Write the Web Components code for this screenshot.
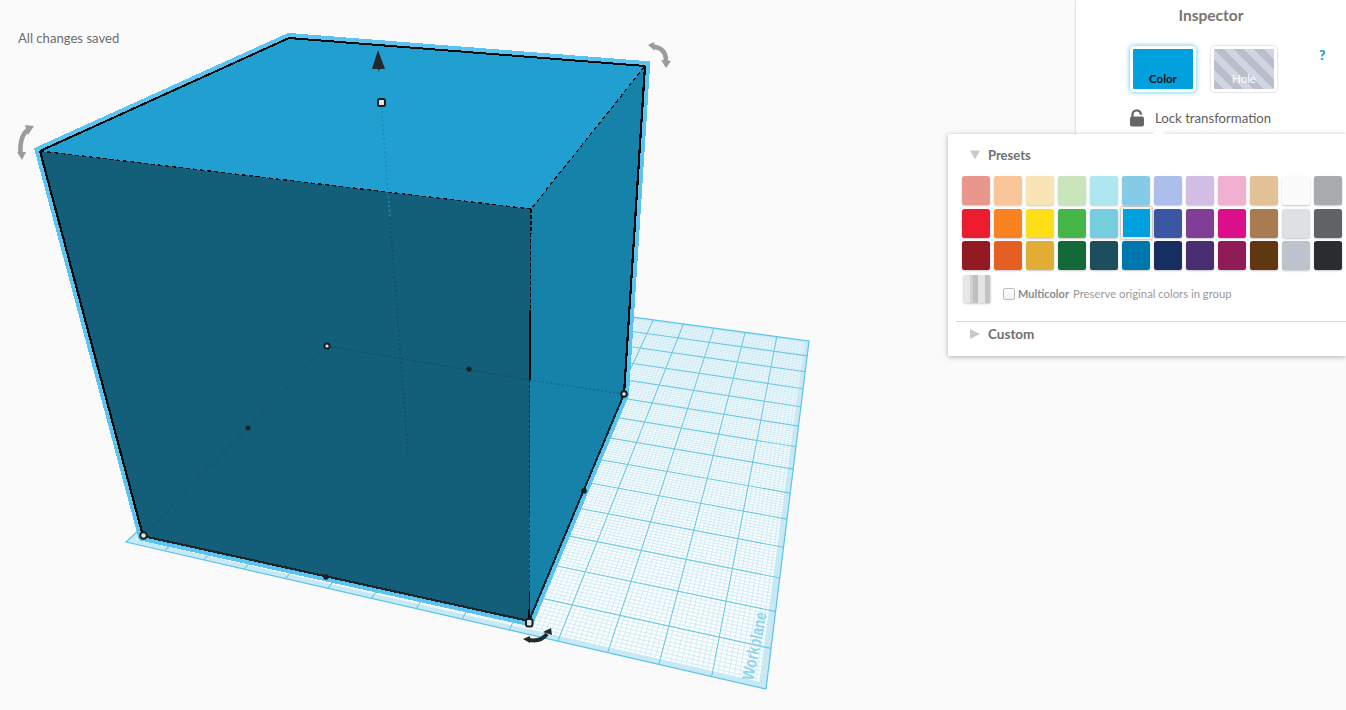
<!DOCTYPE html>
<html lang="en">
<head>
<meta charset="utf-8">
<title>Inspector</title>
<style>
html,body{margin:0;height:710px;overflow:hidden;background:#fafafa;font-family:Lato,"Liberation Sans",sans-serif}
body{position:relative}
</style>
</head>
<body>
<tc-scene></tc-scene>
<tc-status>All changes saved</tc-status>
<tc-inspector></tc-inspector>
<tc-color-popup></tc-color-popup>
<script>
const NS='http://www.w3.org/2000/svg';
function homography(p){
  const [a,b,c,d]=p; // TL,TR,BR,BL
  const dx1=b[0]-c[0],dx2=d[0]-c[0],dx3=a[0]-b[0]+c[0]-d[0];
  const dy1=b[1]-c[1],dy2=d[1]-c[1],dy3=a[1]-b[1]+c[1]-d[1];
  const den=dx1*dy2-dx2*dy1;
  const g=(dx3*dy2-dx2*dy3)/den,h=(dx1*dy3-dx3*dy1)/den;
  const A=b[0]-a[0]+g*b[0],B=d[0]-a[0]+h*d[0],C=a[0];
  const D=b[1]-a[1]+g*b[1],E=d[1]-a[1]+h*d[1],F=a[1];
  return (u,v)=>{const w=g*u+h*v+1;return [(A*u+B*v+C)/w,(D*u+E*v+F)/w];};
}
const fmt=p=>p[0].toFixed(1)+' '+p[1].toFixed(1);

class TcScene extends HTMLElement{
  constructor(){
    super();
    const s=this.attachShadow({mode:'open'});
    s.innerHTML=`<style>
      :host{display:block;position:absolute;inset:0}
      svg{display:block;width:1346px;height:710px}
      text{font-family:"Liberation Sans",sans-serif;font-weight:700;font-size:17px;fill:#8fd5ec}
    </style>
    <svg viewBox="0 0 1346 710" width="1346" height="710" aria-label="Workplane with a selected box">
      <g id="plane"></g>
      <text transform="matrix(.2 -.98 .97 .22 753 681)" textLength="69" lengthAdjust="spacingAndGlyphs">Workplane</text>
      <g shape-rendering="crispEdges">
      <!-- selection glow, then faces -->
      <polygon points="40,151 289,38 645,66 624,394 529,621 143,536" fill="#5ac3ef" stroke="#5ac3ef" stroke-width="10" stroke-linejoin="miter"/>
      <polygon points="289,38 645,66 531,209 40,151" fill="#219fd1"/>
      <polygon points="40,151 531,209 529,621 143,536" fill="#135e79"/>
      <polygon points="531,209 645,66 624,394 529,621" fill="#1681a9"/>
      </g>
      <!-- hidden guides -->
      <g fill="none">
        <path d="M381 102L390 218" stroke="#1a8db9" stroke-width="1.500" stroke-dasharray="2 2.500"/>
        <path d="M390 218L408 455" stroke="#0f5068" stroke-width="1.500" stroke-dasharray="2 2.500"/>
        <path d="M327 346L530 380" stroke="#0f5068" stroke-width="1.300" stroke-dasharray="2 2"/>
        <path d="M530 380L624 394" stroke="#126a8a" stroke-width="1.300" stroke-dasharray="2 2"/>
        <path d="M327 346L143 536" stroke="#0f5068" stroke-width="1" stroke-dasharray="2 1.500"/>
      </g>
      <!-- box edges -->
      <g fill="none" stroke="#0a0a0a" shape-rendering="crispEdges">
        <path d="M40 151L289 38L645 66" stroke-width="2"/>
        <path d="M645 66L624 394" stroke-width="2.200"/>
        <path d="M40 151L143 536" stroke-width="2.200"/>
        <path d="M143 536L529 621" stroke="#1e2428" stroke-width="2.200"/>
        <path d="M529 621L624 394" stroke="#1e2428" stroke-width="2"/>
        <path d="M40 151L531 209L645 66" stroke-width="1.300" stroke-dasharray="4 3"/>
        <path d="M531 209L530.500 310" stroke-width="1.300" stroke-dasharray="4 2"/>
        <path d="M530.500 310L530 380" stroke-width="2"/>
        <path d="M530 380L529.300 592" stroke-width="1" stroke-dasharray="3 2" stroke-opacity=".6"/>
        <path d="M529.300 592L529 621" stroke-width="1.200"/>
      </g>
      <!-- mid-edge dots -->
      <g fill="#1c1f20">
        <circle cx="248" cy="428" r="2.500"/><circle cx="469" cy="369" r="2.600"/>
        <circle cx="326" cy="577" r="2.800"/><circle cx="584" cy="491" r="2.800"/>
      </g>
      <!-- corner handles -->
      <g fill="#e2e2e2" stroke="#1c1f20" stroke-width="2">
        <rect x="378" y="99" width="7" height="7" rx="1.500"/>
        <circle cx="327" cy="346" r="2.600"/>
        <circle cx="143.500" cy="535.500" r="3.300"/>
        <rect x="526" y="619" width="6.500" height="7.500" rx="2"/>
        <circle cx="624" cy="394" r="2.800"/>
      </g>
      <!-- height arrow -->
      <path d="M378 50L385 69L379.500 69L379 72L378 69L372 69Z" fill="#222a2e"/>
      <!-- rotate handles -->
      <g fill="none" stroke="#9c9c9c" stroke-width="4.600">
        <path d="M29 129Q19.500 135 20.500 153"/>
        <path d="M653 46.500Q666 48 666 61"/>
      </g>
      <g fill="#9c9c9c">
        <path d="M25 125L34 126L28 135Z"/>
        <path d="M17 152L26 152L22 160Z"/>
        <path d="M648 45L654 42L655 51Z"/>
        <path d="M661 60L671 61L666 68Z"/>
      </g>
      <path d="M529 640Q541 642 547 634" fill="none" stroke="#222a2e" stroke-width="4"/>
      <path d="M523 639L530 636L530 643Z" fill="#222a2e"/>
      <path d="M551 628L552 635L543 632Z" fill="#222a2e"/>
    </svg>`;
    const H=homography([[403,286],[809,341],[766,689],[126,542]]);
    const g=s.getElementById('plane');
    const add=(tag,attrs)=>{const e=document.createElementNS(NS,tag);for(const k in attrs)e.setAttribute(k,attrs[k]);g.appendChild(e);return e;};
    const quad=(a,b)=>'M'+fmt(H(a,a))+'L'+fmt(H(b,a))+'L'+fmt(H(b,b))+'L'+fmt(H(a,b))+'Z';
    add('path',{d:quad(0,1),fill:'#fdfefe'});
    const N=14,M=10;
    let minor='',major='';
    for(let i=0;i<=N*M;i++){
      const t=i/(N*M);
      const seg='M'+fmt(H(t,0))+'L'+fmt(H(t,1))+'M'+fmt(H(0,t))+'L'+fmt(H(1,t));
      if(i%M===0){ if(i>0&&i<N*M) major+=seg; }
      else minor+=seg;
    }
    add('path',{d:minor,stroke:'#cdeaf4',"stroke-width":'.9',fill:'none'});
    const b=.0095;
    add('path',{d:quad(0,1)+quad(b,1-b),fill:'#c8e9f4',"fill-rule":'evenodd'});
    add('path',{d:major,stroke:'#6cc8e1',"stroke-width":'1.100',fill:'none'});
    add('path',{d:quad(0,1),stroke:'#58c5ec',"stroke-width":'1.200',fill:'none'});
  }
}
customElements.define('tc-scene',TcScene);

class TcStatus extends HTMLElement{
  constructor(){
    super();
    this.attachShadow({mode:'open'}).innerHTML=`<style>
      :host{display:block;position:absolute;left:18px;top:30px;font:13.100px/16px Lato,"Liberation Sans",sans-serif;color:#6d6d70}
    </style><slot></slot>`;
  }
}
customElements.define('tc-status',TcStatus);

class TcSolidButton extends HTMLElement{
  constructor(){
    super();
    this.attachShadow({mode:'open'}).innerHTML=`<style>
      :host{display:flex;box-sizing:border-box;width:66px;height:46px;border:3px solid #fff;border-radius:4px;align-items:flex-end;justify-content:center;padding-bottom:4px;
        font:700 11.500px/13px Lato,"Liberation Sans",sans-serif;box-shadow:0 0 2px rgba(0,0,0,.35)}
      :host([kind=color]){background:#00a1dc;color:#111;box-shadow:0 0 4px 1px #7fd3ea}
      :host([kind=hole]){background:repeating-linear-gradient(45deg,#babecb 0 7px,#d1d4e1 7px 14px);color:#fff;font-weight:400}
    </style><slot></slot>`;
  }
}
customElements.define('tc-solid-button',TcSolidButton);

class TcInspector extends HTMLElement{
  constructor(){
    super();
    this.attachShadow({mode:'open'}).innerHTML=`<style>
      :host{display:flex;flex-direction:column;position:absolute;right:0;top:0;width:270px;height:134px;box-sizing:border-box;background:#fff;box-shadow:0 0 2px rgba(0,0,0,.25);color:#5e5e60}
      h2{margin:6px 0 0;font:700 15.500px/18px Lato,"Liberation Sans",sans-serif;color:#7b7470;text-align:center}
      .kinds{display:flex;align-items:flex-start;margin:22px 0 0 54px;gap:15px}
      .help{margin:1px 0 0 27px;font:900 14px/16px Lato,"Liberation Sans",sans-serif;color:#1f9cc4}
      .lock{display:flex;align-items:center;gap:11px;margin:17px 0 0 54px;font:13.200px/18px Lato,"Liberation Sans",sans-serif}
      svg{display:block;margin-top:-1px}
    </style>
    <h2>Inspector</h2>
    <div class="kinds">
      <tc-solid-button kind="color">Color</tc-solid-button>
      <tc-solid-button kind="hole">Hole</tc-solid-button>
      <span class="help">?</span>
    </div>
    <div class="lock">
      <svg width="14" height="18" viewBox="0 0 14 18"><path d="M2.500 8.500V5.500a4.200 4.200 0 0 1 8.400 0V5.800" fill="none" stroke="#666" stroke-width="2.300"/><rect y="7.500" width="14" height="10" rx="2" fill="#666"/></svg>
      <span>Lock transformation</span>
    </div>`;
  }
}
customElements.define('tc-inspector',TcInspector);

class TcSwatch extends HTMLElement{
  static get observedAttributes(){return ['color'];}
  constructor(){
    super();
    this.attachShadow({mode:'open'}).innerHTML=`<style>
      :host{display:block;height:29px;border-radius:2.500px;background:var(--c);box-shadow:0 1px 2px rgba(0,0,0,.22)}
      :host([selected]){box-sizing:border-box;margin:-1.500px -1.500px;height:32px;border:2px solid #f2f2f2;box-shadow:0 0 3px rgba(0,0,0,.55);position:relative;border-radius:1px}
    </style>`;
  }
  attributeChangedCallback(n,o,v){this.style.setProperty('--c',v);}
}
customElements.define('tc-swatch',TcSwatch);

class TcColorPopup extends HTMLElement{
  constructor(){
    super();
    const rows=[
      ['#e9968d','#fbc59a','#f8e4b4','#c9e5bd','#aee7f0','#86cbe6','#acbfea','#d2bde4','#efb0d1','#e2c196','#fbfbfb','#a7abae'],
      ['#ed1c2e','#f78320','#ffde17','#46b649','#74cedd','#00a1dc','#3b56a2','#7f3f98','#db0f8c','#a87b50','#dde1e4','#606366'],
      ['#931a22','#e55f25','#e0ae35','#126a38','#1c4e5b','#0077ac','#182e63','#482f73','#8f1c56','#5f3813','#bcc3ca','#2a2d30']];
    const sw=rows.flat().map(c=>`<tc-swatch color="${c}"${c==='#00a1dc'?' selected':''}></tc-swatch>`).join('');
    this.attachShadow({mode:'open'}).innerHTML=`<style>
      :host{display:flex;flex-direction:column;position:absolute;left:948px;top:134px;width:398px;height:222px;box-sizing:border-box;background:#fff;box-shadow:0 1px 5px rgba(0,0,0,.3);color:#77777a}
      .tip{position:absolute;left:205px;top:-6px;width:0;height:0;border:solid transparent;border-width:0 6px 6px;border-bottom-color:#fff}
      .head{display:flex;align-items:center;height:18px;margin:12px 0 0 22px;font:700 13px/18px Lato,"Liberation Sans",sans-serif;color:#6f6f72;gap:8px}
      .tri{width:10px;height:10px;flex:none;background:#c9c9c9}
      .down{clip-path:polygon(0 5%,100% 5%,50% 95%)}
      .right{clip-path:polygon(0 0,100% 50%,0 100%)}
      .grid{display:grid;grid-template-columns:repeat(12,28px);gap:3.500px 4px;margin:12px 0 0 14px}
      .multi{display:flex;align-items:flex-start;margin:5px 0 0 15px}
      .stripes{width:28px;height:28px;border-radius:2.500px;box-shadow:0 1px 2px rgba(0,0,0,.2);
        background:linear-gradient(90deg,#e6e6e6 0 7px,#d2d2d2 7px 10px,#bfbfbf 10px 15px,#e4e4e4 15px 22px,#c2c2c2 22px 27px,#e6e6e6 27px)}
      .check{width:10px;height:10px;margin:13px 0 0 12px;border:1px solid #bdbdbd;border-radius:2px;background:linear-gradient(#fff,#efefef);flex:none}
      .label{margin:12px 0 0 3px;font:700 11px/14px Lato,"Liberation Sans",sans-serif;color:#8b8b8e;white-space:nowrap}
      .note{margin:12px 0 0 4px;font:11.300px/14px Lato,"Liberation Sans",sans-serif;color:#99999c;white-space:nowrap}
      hr{margin:18px 0 0 8px;border:0;border-top:1px solid #d8d8d8;height:0}
      .head.custom{margin-top:3px;font-size:13.500px}
    </style>
    <div class="tip"></div>
    <div class="head"><span class="tri down"></span><span>Presets</span></div>
    <div class="grid">${sw}</div>
    <div class="multi">
      <div class="stripes"></div>
      <span class="check"></span>
      <span class="label">Multicolor</span>
      <span class="note">Preserve original colors in group</span>
    </div>
    <hr>
    <div class="head custom"><span class="tri right"></span><span>Custom</span></div>`;
  }
}
customElements.define('tc-color-popup',TcColorPopup);
</script>
</body>
</html>
